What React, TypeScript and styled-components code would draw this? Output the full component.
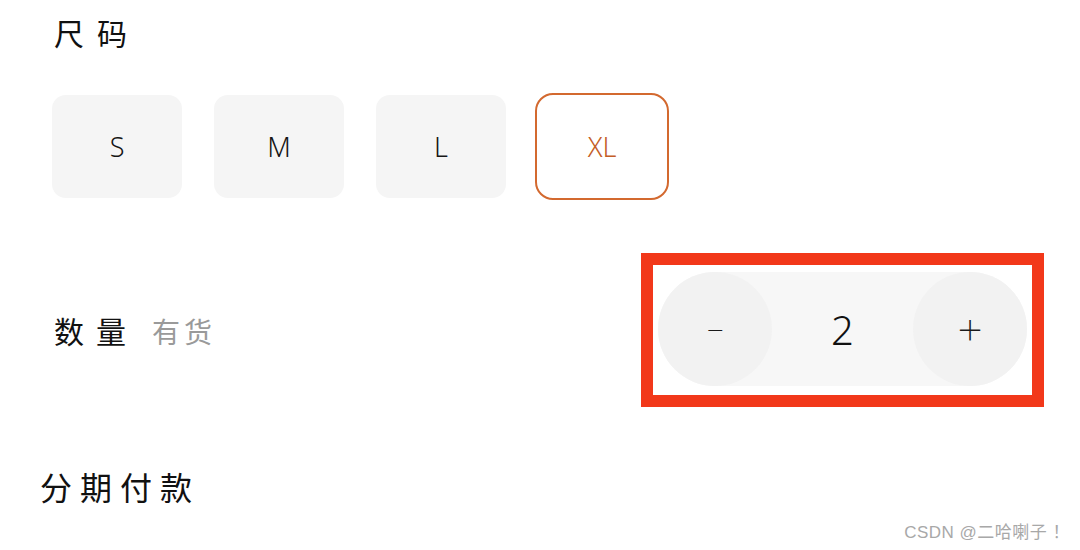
import styled, { createGlobalStyle } from 'styled-components';

const GlobalStyle = createGlobalStyle`
  html, body {
    margin: 0;
    padding: 0;
    background: #ffffff;
  }
  body {
    font-family: "Noto Sans CJK SC", "Noto Sans", sans-serif;
    color: #1a1a1a;
  }
`;

const Page = styled.div`
  position: relative;
  width: 1080px;
  height: 550px;
  overflow: hidden;
  display: flex;
  flex-direction: column;
`;

const Title = styled.div`
  margin: 15px 0 0 54px;
  font-size: 30px;
  line-height: 34px;
  letter-spacing: 13px;
  color: #111;
`;

const SizeRow = styled.div`
  display: flex;
  align-items: center;
  gap: 32px;
  margin: 44px 0 0 52px;
`;

const SizeOption = styled.div<{ $active?: boolean }>`
  display: flex;
  align-items: center;
  justify-content: center;
  box-sizing: border-box;
  width: ${({ $active }) => ($active ? '134px' : '130px')};
  height: ${({ $active }) => ($active ? '107px' : '103px')};
  margin-left: ${({ $active }) => ($active ? '-3px' : '0')};
  border-radius: ${({ $active }) => ($active ? '18px' : '14px')};
  background: ${({ $active }) => ($active ? '#ffffff' : '#f5f5f5')};
  border: ${({ $active }) => ($active ? '2.5px solid #d3692f' : 'none')};
  color: ${({ $active }) => ($active ? '#c45d26' : '#161616')};
  font-family: "Noto Sans", "Liberation Sans", sans-serif;
  font-weight: 300;
  font-size: 27px;
`;

const QuantityRow = styled.div`
  display: flex;
  align-items: center;
  justify-content: space-between;
  margin: 53px 36px 0 54px;
`;

const Label = styled.div`
  display: flex;
  align-items: baseline;
  gap: 14px;
  font-size: 30px;
  letter-spacing: 12px;
  color: #111;
`;

const Stock = styled.span`
  font-size: 28px;
  letter-spacing: 4px;
  color: #9a9a9a;
`;

const Highlight = styled.div`
  box-sizing: border-box;
  width: 403px;
  height: 154px;
  border: 12px solid #f2381a;
  padding: 7px 5px 0 5px;
`;

const Stepper = styled.div`
  display: flex;
  align-items: center;
  justify-content: space-between;
  height: 114px;
  border-radius: 57px;
  background: #f7f7f7;
`;

const StepButton = styled.div<{ $size: number }>`
  display: flex;
  align-items: center;
  justify-content: center;
  width: 114px;
  height: 114px;
  border-radius: 50%;
  background: #f2f2f2;
  font-family: "Noto Sans", "Liberation Sans", sans-serif;
  font-weight: 200;
  font-size: ${({ $size }) => $size}px;
  color: #1a1a1a;
`;

const Count = styled.div`
  font-family: "Noto Sans", "Liberation Sans", sans-serif;
  font-weight: 300;
  font-size: 40px;
  color: #111;
`;

const Heading = styled.div`
  margin: 61px 0 0 40px;
  font-size: 32px;
  line-height: 36px;
  letter-spacing: 8px;
  color: #111;
`;

const Watermark = styled.div`
  position: absolute;
  right: 10px;
  bottom: 7px;
  font-family: "Liberation Sans", "Noto Sans CJK SC", sans-serif;
  font-size: 17px;
  letter-spacing: 0.5px;
  color: #a8a8a8;
`;

const sizes = ['S', 'M', 'L', 'XL'];

export default function App() {
  return (
    <Page>
      <GlobalStyle />
      <Title>尺码</Title>
      <SizeRow>
        {sizes.map((s) => (
          <SizeOption key={s} $active={s === 'XL'}>
            {s}
          </SizeOption>
        ))}
      </SizeRow>
      <QuantityRow>
        <Label>
          数量
          <Stock>有货</Stock>
        </Label>
        <Highlight>
          <Stepper>
            <StepButton $size={30}>−</StepButton>
            <Count>2</Count>
            <StepButton $size={44}>+</StepButton>
          </Stepper>
        </Highlight>
      </QuantityRow>
      <Heading>分期付款</Heading>
      <Watermark>CSDN @二哈喇子 ！</Watermark>
    </Page>
  );
}
